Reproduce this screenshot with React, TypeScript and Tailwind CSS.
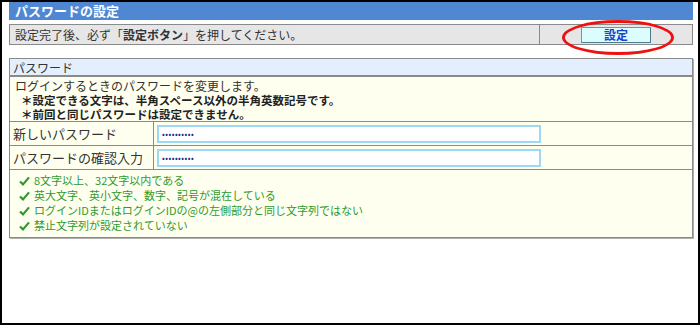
import React from "react";

const FONT = { fontFamily: '"Noto Sans CJK JP", "Noto Sans", sans-serif' };

const checks = [
  "8文字以上、32文字以内である",
  "英大文字、英小文字、数字、記号が混在している",
  "ログインIDまたはログインIDの@の左側部分と同じ文字列ではない",
  "禁止文字列が設定されていない",
];

function Check() {
  return (
    <svg width="11" height="10" viewBox="0 0 11 10" className="mr-[4px] shrink-0">
      <path d="M1 5.5 L4 8.4 L10 1.4" fill="none" stroke="#2e9a2e" strokeWidth="2.2" />
    </svg>
  );
}

function Dots() {
  return (
    <div className="flex items-center h-full pl-[3px] text-[#1b2a8a] text-[8px] leading-none tracking-[0.5px]">
      ••••••••••
    </div>
  );
}

export default function App() {
  return (
    <div
      className="w-[700px] h-[325px] border-2 border-black bg-white pl-[7px] pr-[5px] text-[#222]"
      style={FONT}
    >
      {/* title */}
      <div className="h-[18px] bg-[#4f87d3] pl-[6px] text-[13px] leading-[18px] font-bold text-white">
        パスワードの設定
      </div>

      {/* instruction bar */}
      <div className="relative mt-[4px] h-[21px] flex border border-[#8a8a8a] bg-[#e6e6e6]">
        <div className="flex-1 pl-[5px] text-[12px] leading-[19px] text-[#333]">
          設定完了後、必ず「<span className="font-bold">設定ボタン</span>」を押してください。
        </div>
        <div className="w-[153px] border-l border-[#8a8a8a] flex items-center justify-center">
          <div className="w-[70px] h-[16px] border border-[#6a9aa6] border-b-[#4d7d88] border-r-[#4d7d88] bg-[#dcfdfd] text-center text-[12px] leading-[14px] font-bold text-[#1a3fcc]">
            設定
          </div>
        </div>
        <div className="absolute left-[552px] top-[-5px] w-[112px] h-[35px] rounded-[50%] border-[3px] border-[#ee1111]" />
      </div>

      {/* password section */}
      <div className="mt-[13px] border border-[#8a8a8a] shadow-[1px_1px_0_#b0b0b0] text-[12px]">
        <div className="h-[18px] bg-[#e3effc] border-b-2 border-[#8a8a8a] pl-[3px] leading-[17px] text-[#333]">
          パスワード
        </div>
        <div className="h-[45px] bg-[#fffff0] border-b border-[#8a8a8a] pl-[5px] pt-[1px]">
          <div className="leading-[15px] text-[#333]">ログインするときのパスワードを変更します。</div>
          <div className="pl-[6px] font-bold text-[11.5px] leading-[14px] text-[#222]">
            <div>＊設定できる文字は、半角スペース以外の半角英数記号です。</div>
            <div>＊前回と同じパスワードは設定できません。</div>
          </div>
        </div>
        <div className="flex h-[24px] bg-[#fffff0] border-b border-[#8a8a8a]">
          <div className="w-[144px] border-r border-[#8a8a8a] pl-[3px] text-[13px] leading-[23px] text-[#333]">
            新しいパスワード
          </div>
          <div className="flex items-center pl-[3px]">
            <div className="w-[384px] h-[18px] border-2 border-[#9dd8f4] bg-white">
              <Dots />
            </div>
          </div>
        </div>
        <div className="flex h-[24px] bg-[#fffff0] border-b border-[#8a8a8a]">
          <div className="w-[144px] border-r border-[#8a8a8a] pl-[3px] text-[13px] leading-[23px] text-[#333]">
            パスワードの確認入力
          </div>
          <div className="flex items-center pl-[3px]">
            <div className="w-[384px] h-[18px] border-2 border-[#9dd8f4] bg-white">
              <Dots />
            </div>
          </div>
        </div>
        <div className="h-[67px] bg-[#fffff0] pl-[9px] pt-[3px]">
          {checks.map((c) => (
            <div key={c} className="flex items-center h-[15px] text-[11px] text-[#2e9a2e]">
              <Check />
              {c}
            </div>
          ))}
        </div>
      </div>
    </div>
  );
}
